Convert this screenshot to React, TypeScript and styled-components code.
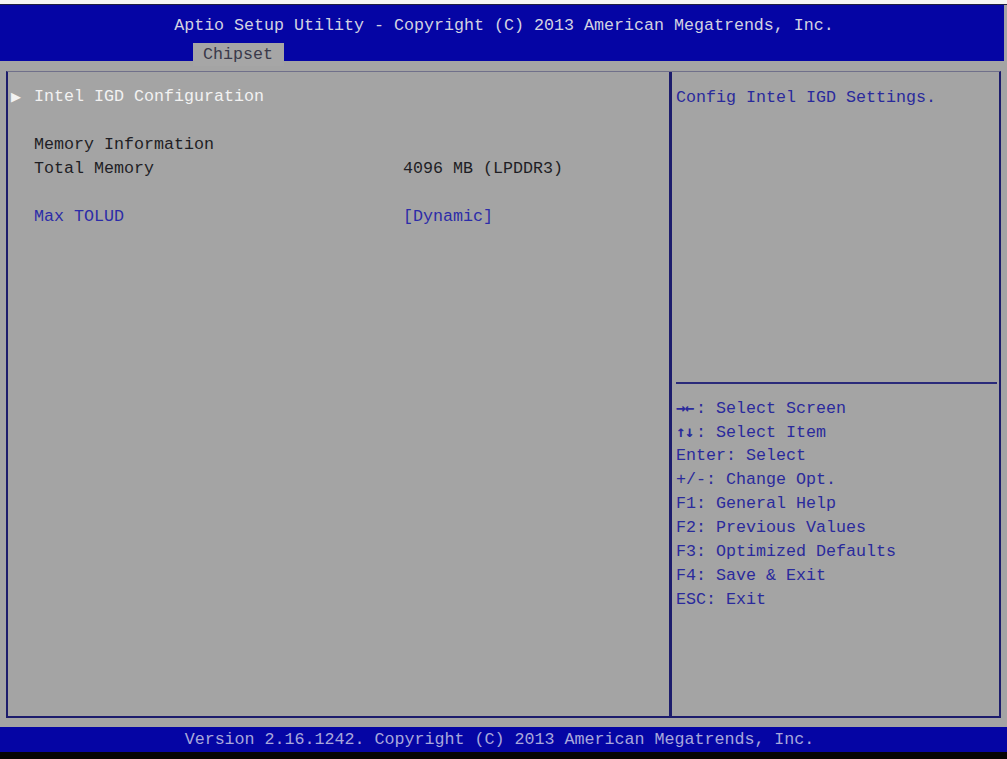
import React from "react";
import styled, { createGlobalStyle } from "styled-components";

const Global = createGlobalStyle`
  html, body { margin: 0; padding: 0; background: #a4a4a4; }
  body { font-family: "Liberation Mono", "DejaVu Sans Mono", monospace; font-size: 16.67px; }
`;

const Screen = styled.div`
  width: 1007px;
  height: 759px;
  display: flex;
  flex-direction: column;
  background: #a4a4a4;
  overflow: hidden;
`;

const TopStrip = styled.div`
  height: 4px;
  background: #f4f4f4;
  border-bottom: 1px solid #202040;
`;

const Header = styled.header`
  height: 56px;
  background: #0505a4;
  display: flex;
  flex-direction: column;
  margin-right: 3px;
`;

const Title = styled.div`
  height: 24px;
  line-height: 24px;
  margin: 9px 0 5px;
  text-align: center;
  padding-left: 4px;
  color: #d2d2e2;
  white-space: pre;
`;

const Tab = styled.div`
  align-self: flex-start;
  margin-left: 193px;
  height: 23px;
  line-height: 23px;
  padding: 0 11px 0 10px;
  background: #a6a6a6;
  color: #3a3a4a;
`;

const Gap = styled.div<{ $h: number }>`
  height: ${(p) => p.$h}px;
`;

const Frame = styled.main`
  height: 647px;
  box-sizing: border-box;
  margin: 0 6px;
  border-top: 1px solid #70708a;
  border-left: 2px solid #1c1c6c;
  border-right: 2px solid #1c1c6c;
  border-bottom: 2px solid #1c1c6c;
  display: flex;
`;

const LeftPanel = styled.section`
  width: 664px;
  box-sizing: border-box;
  padding-top: 13px;
  border-right: 3px solid #1c1c6c;
  display: flex;
  flex-direction: column;
`;

const Row = styled.div`
  height: 24px;
  line-height: 24px;
  display: grid;
  grid-template-columns: 26px 369px 1fr;
  white-space: pre;
`;

const Marker = styled.span`
  color: #f2f2f2;
  font-family: "DejaVu Sans", sans-serif;
  font-size: 13px;
  padding-left: 3px;
`;

const Label = styled.span<{ $tone: "white" | "dark" | "blue" }>`
  color: ${(p) =>
    p.$tone === "white" ? "#f2f2f2" : p.$tone === "blue" ? "#2c2ca8" : "#1e1e24"};
`;

const Value = styled.span<{ $blue?: boolean }>`
  color: ${(p) => (p.$blue ? "#2c2ca8" : "#1e1e24")};
`;

const RightPanel = styled.aside`
  flex: 1;
  display: flex;
  flex-direction: column;
`;

const HelpTop = styled.div`
  height: 310px;
  box-sizing: border-box;
  padding: 14px 0 0 4px;
  line-height: 24px;
  color: #2a2a9c;
  white-space: pre;
`;

const Divider = styled.div`
  height: 2px;
  margin: 0 2px 0 4px;
  background: #2a2a7a;
`;

const KeyList = styled.ul`
  list-style: none;
  margin: 0;
  padding: 12px 0 0 4px;
`;

const Key = styled.li`
  height: 24px;
  line-height: 24px;
  color: #2a2a9c;
  white-space: pre;
`;

const Arrows = styled.span`
  display: inline-block;
  width: 20px;
  font-family: "DejaVu Sans Mono", monospace;
  font-weight: bold;
  font-size: 16px;
  letter-spacing: -1px;
`;

const Footer = styled.footer`
  height: 25px;
  line-height: 25px;
  background: #0505a4;
  color: #a8a8dc;
  text-align: center;
  white-space: pre;
  padding-right: 8px;
`;

const Bottom = styled.div`
  height: 7px;
  background: #050505;
`;

const rows: { marker?: boolean; label: string; tone: "white" | "dark" | "blue"; value?: string; blue?: boolean }[] = [
  { marker: true, label: "Intel IGD Configuration", tone: "white" },
  { label: "", tone: "dark" },
  { label: "Memory Information", tone: "dark" },
  { label: "Total Memory", tone: "dark", value: "4096 MB (LPDDR3)" },
  { label: "", tone: "dark" },
  { label: "Max TOLUD", tone: "blue", value: "[Dynamic]", blue: true },
];

const keys: { glyph?: string; text: string }[] = [
  { glyph: "→←", text: ": Select Screen" },
  { glyph: "↑↓", text: ": Select Item" },
  { text: "Enter: Select" },
  { text: "+/-: Change Opt." },
  { text: "F1: General Help" },
  { text: "F2: Previous Values" },
  { text: "F3: Optimized Defaults" },
  { text: "F4: Save & Exit" },
  { text: "ESC: Exit" },
];

export default function App() {
  return (
    <>
      <Global />
      <Screen>
        <TopStrip />
        <Header>
          <Title>Aptio Setup Utility - Copyright (C) 2013 American Megatrends, Inc.</Title>
          <Tab>Chipset</Tab>
        </Header>
        <Gap $h={10} />
        <Frame>
          <LeftPanel>
            {rows.map((r, i) => (
              <Row key={i}>
                <Marker>{r.marker ? "▶" : ""}</Marker>
                <Label $tone={r.tone}>{r.label}</Label>
                <Value $blue={r.blue}>{r.value ?? ""}</Value>
              </Row>
            ))}
          </LeftPanel>
          <RightPanel>
            <HelpTop>Config Intel IGD Settings.</HelpTop>
            <Divider />
            <KeyList>
              {keys.map((k) => (
                <Key key={k.text}>
                  {k.glyph && <Arrows>{k.glyph}</Arrows>}
                  {k.text}
                </Key>
              ))}
            </KeyList>
          </RightPanel>
        </Frame>
        <Gap $h={9} />
        <Footer>Version 2.16.1242. Copyright (C) 2013 American Megatrends, Inc.</Footer>
        <Bottom />
      </Screen>
    </>
  );
}
